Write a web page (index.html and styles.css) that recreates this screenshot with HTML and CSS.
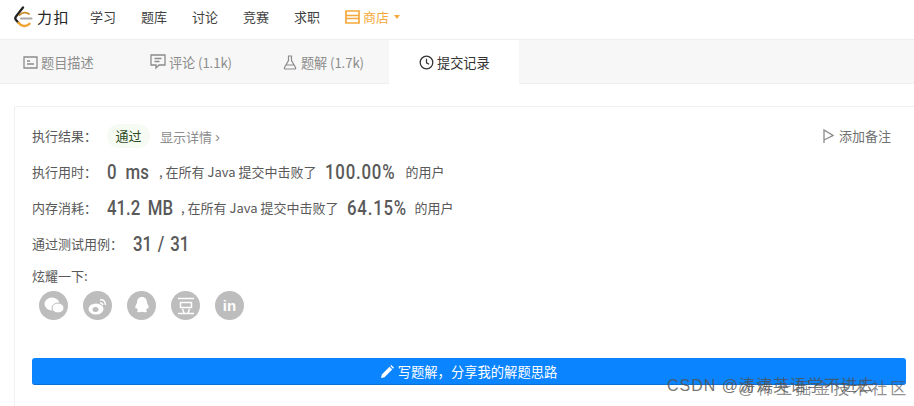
FILE: index.html
```html
<!DOCTYPE html>
<html lang="zh">
<head>
<meta charset="utf-8">
<title>力扣</title>
<link rel="stylesheet" href="styles.css">
</head>
<body>
<header class="nav">
  <div class="logo">
    <svg class="logo-mark" width="19" height="22" viewBox="0 0 19 22">
      <path d="M9 1.500 2 10.500c-1 1.300-.8 2.700.2 3.800l2.300 2.500" fill="none" stroke="#222" stroke-width="2.300" stroke-linecap="round" stroke-linejoin="round"/>
      <path d="M4.500 16.800c2.500 3.500 7 4.500 11 1" fill="none" stroke="#f0a32f" stroke-width="2.400" stroke-linecap="round"/>
      <path d="M5.500 9c2.500-2.500 6-3 9.500-1" fill="none" stroke="#c98a2c" stroke-width="1.800" stroke-linecap="round"/>
      <path d="M7 12.500h10.500" stroke="#a8a8a8" stroke-width="2" stroke-linecap="round"/>
    </svg>
    <span class="logo-text">力扣</span>
  </div>
  <nav class="menu">
    <a>学习</a><a>题库</a><a>讨论</a><a>竞赛</a><a>求职</a>
    <a class="store">
      <svg width="15" height="14" viewBox="0 0 15 14"><path d="M1 1h13v12H1zM1 5.500h13M1 8.500h13" fill="none" stroke="#f5a93c" stroke-width="1.700"/></svg>
      商店<i class="caret"></i>
    </a>
  </nav>
</header>

<div class="tabs">
  <div class="tab t1">
    <svg width="15" height="13" viewBox="0 0 15 13"><path d="M1 1h13v11H1zM4 5h3M4 8h7" fill="none" stroke="#8c8c8c" stroke-width="1.300"/></svg>
    题目描述
  </div>
  <div class="tab t2">
    <svg width="16" height="16" viewBox="0 0 16 16"><path d="M1 1h14v10H9l-3 3v-3H1zM4.500 4.500h7M4.500 7.500h5" fill="none" stroke="#8c8c8c" stroke-width="1.300"/></svg>
    评论 (1.1k)
  </div>
  <div class="tab t3">
    <svg width="14" height="15" viewBox="0 0 14 15"><path d="M5 1h4M5.500 1v4.500L1.500 12.500q-.6 1.500 1 1.500h9q1.600 0 1-1.500L8.500 5.500V1M3.500 10h7" fill="none" stroke="#8c8c8c" stroke-width="1.200"/></svg>
    题解 (1.7k)
  </div>
  <div class="tab active">
    <svg width="15" height="15" viewBox="0 0 15 15"><circle cx="7.500" cy="7.500" r="6.300" fill="none" stroke="#333" stroke-width="1.300"/><path d="M7.500 3.800v4l2.600 1.500" fill="none" stroke="#333" stroke-width="1.200"/></svg>
    提交记录
  </div>
</div>

<main class="content">
  <section class="card">
    <div class="row result">
      <span class="label">执行结果：</span>
      <span class="pass">通过</span>
      <span class="detail">显示详情 <span class="chev">›</span></span>
      <span class="note">
        <svg width="11" height="14" viewBox="0 0 11 14"><path d="M1 14V1l9 5.500-9 4.500" fill="none" stroke="#8a8a8a" stroke-width="1.300"/></svg>
        添加备注
      </span>
    </div>
    <div class="row stat s1">
      <span class="label">执行用时：</span>
      <b class="num n1 w-time">0 ms</b>
      <span class="txt">, 在所有 Java 提交中击败了</span>
      <b class="num n2 w-pct1">100.00%</b>
      <span class="txt">的用户</span>
    </div>
    <div class="row stat s2">
      <span class="label">内存消耗：</span>
      <b class="num n1 w-mem">41.2 MB</b>
      <span class="txt">, 在所有 Java 提交中击败了</span>
      <b class="num n2 w-pct2">64.15%</b>
      <span class="txt">的用户</span>
    </div>
    <div class="row stat s3">
      <span class="label">通过测试用例：</span>
      <b class="num cases">31 / 31</b>
    </div>
    <div class="share-label">炫耀一下:</div>
    <div class="shares">
      <span class="share">
        <svg width="20" height="18" viewBox="0 0 20 18"><ellipse cx="8" cy="7" rx="7.500" ry="6.500" fill="#fff"/><ellipse cx="14" cy="11" rx="6" ry="5" fill="#fff" stroke="#bdbdbd"/></svg>
      </span>
      <span class="share">
        <svg width="20" height="18" viewBox="0 0 20 18"><ellipse cx="8" cy="12" rx="7.500" ry="5.500" fill="#fff"/><ellipse cx="7.500" cy="12.500" rx="3" ry="2.500" fill="#bdbdbd"/><path d="M12 3q5-1 5.500 5M12 6q2.500-.5 3 2" fill="none" stroke="#fff" stroke-width="1.500"/></svg>
      </span>
      <span class="share">
        <svg width="18" height="19" viewBox="0 0 18 19"><path d="M9 1c3.500 0 5 2.500 5 5.500 0 1 1 2 1.500 3.500.6 2-.3 3-1 2-.4 1-1 1.500-1.500 2l1 1.500c-.5 1-2.500 1-5 .3-2.500.7-4.500.7-5-.3L5 14c-.5-.5-1.100-1-1.500-2-.7 1-1.600 0-1-2C3 8.500 4 7.500 4 6.500 4 3.500 5.500 1 9 1z" fill="#fff"/></svg>
      </span>
      <span class="share">
        <svg width="18" height="18" viewBox="0 0 18 18"><path d="M1 1.500h16M3.500 5.500h11v5h-11zM5.500 12l1.500 4M12.500 12 11 16M1 16.500h16" fill="none" stroke="#fff" stroke-width="1.500"/></svg>
      </span>
      <span class="share"><span class="in">in</span></span>
    </div>
    <button class="write">
      <svg width="13" height="13" viewBox="0 0 13 13"><path d="M0 13l.8-3.500L8.500 1.800l2.700 2.700-7.700 7.700zM9.300 1l1-1 2.700 2.700-1 1z" fill="#fff"/></svg>
      写题解，分享我的解题思路
    </button>
  </section>
</main>

<div class="watermark"><span>CSDN @涛涛英语学不进去</span><span class="wm2">@稀土掘金技术社区</span></div>
</body>
</html>
```

FILE: styles.css
```css
* { box-sizing: border-box; }
html, body { margin: 0; padding: 0; }
body {
  width: 914px;
  height: 406px;
  overflow: hidden;
  position: relative;
  background: #fff;
  font-family: "Noto Sans CJK SC", "Liberation Sans", sans-serif;
  color: #595959;
  font-size: 13px;
}
.nav {
  height: 39px;
  display: flex;
  align-items: center;
  background: #fff;
  padding-bottom: 6px;
}
.logo {
  display: flex;
  align-items: center;
  margin-left: 14px;
  width: 76px;
}
.logo-mark { margin-right: 4px; }
.logo-text {
  font-size: 15px;
  font-weight: 400;
  color: #262626;
  letter-spacing: 1.500px;
  line-height: 20px;
}
.menu { display: flex; align-items: center; gap: 23px; }
.menu a { font-size: 13px; color: #3f3f3f; line-height: 18px; width: 28px; white-space: nowrap; }
.menu a.store { display: flex; align-items: center; color: #f5a93c; gap: 3px; width: auto; }
.caret {
  width: 0;
  height: 0;
  margin-left: 2px;
  border: 3px solid transparent;
  border-top: 4px solid #f5a93c;
  border-bottom: 0;
}
.tabs {
  height: 45px;
  display: flex;
  background: #f7f7f7;
  border-top: 1px solid #eee;
  border-bottom: 1px solid #efefef;
  font-size: 13.200px;
  color: #8c8c8c;
}
.tab {
  display: flex;
  align-items: center;
  gap: 3px;
  white-space: nowrap;
  height: 44px;
}
.t1 { width: 127px; padding-left: 23px; }
.t2 { width: 133px; padding-left: 23px; letter-spacing: -.1px; }
.t3 { width: 129px; padding-left: 23px; gap: 4px; letter-spacing: -.1px; }
.tab.active {
  width: 130px;
  background: #fff;
  color: #333;
  padding-left: 30px;
}
.content { padding: 22px 0 0 14px; }
.card {
  width: 900px;
  height: 300px;
  background: #fff;
  border: 1px solid #f0f0f0;
  border-width: 1px 0 0 1px;
  border-radius: 3px 0 0 0;
  padding: 16px 0 0 17px;
}
.row { display: flex; align-items: center; white-space: nowrap; }
.label { font-size: 13px; color: #595959; line-height: 18px; }
.result { height: 26px; }
.result .label { width: 75px; }
.pass {
  width: 43px;
  height: 24px;
  line-height: 24px;
  text-align: center;
  border-radius: 12px;
  background: #f6fbf3;
  color: #2a4a22;
}
.detail { margin-left: 10px; color: #8c8c8c; font-size: 13px; }
.chev { font-family: "Liberation Sans", sans-serif; font-size: 15px; }
.note {
  position: absolute;
  left: 823px;
  top: 127px;
  display: flex;
  align-items: center;
  gap: 5px;
  color: #707070;
  font-size: 13px;
  line-height: 18px;
}
.stat { height: 26px; }
.s1, .s2, .s3 { margin-top: 10px; }
.stat .label { width: 75px; }
.s3 .label { width: 101px; }
.num {
  display: block;
  flex: none;
  font-family: "Roboto", "Liberation Sans", sans-serif;
  font-weight: 500;
  font-size: 21px;
  color: #595959;
  line-height: 26px;
  word-spacing: 4px;
  transform: scaleX(.8);
  transform-origin: left center;
}
.w-time { width: 43px; word-spacing: 6px; }
.w-mem { width: 65px; }
.w-pct1 { width: 71px; letter-spacing: 1px; }
.w-pct2 { width: 58px; letter-spacing: 1px; }
.cases { width: 54px; word-spacing: 2px; }
.txt { font-size: 13px; color: #595959; line-height: 16px; }
.n1 + .txt { margin-left: 9px; }
.n2 { margin-left: 9px; }
.n2 + .txt { margin-left: 9px; }
.share-label { margin-top: 10px; font-size: 13px; line-height: 18px; color: #595959; }
.shares { display: flex; gap: 15px; margin-top: 6px; margin-left: 7px; }
.share {
  width: 29px;
  height: 29px;
  border-radius: 50%;
  background: #bdbdbd;
  display: flex;
  align-items: center;
  justify-content: center;
}
.share svg { display: block; }
.in { color: #fff; font: 700 15px "Liberation Sans", sans-serif; }
.write {
  display: flex;
  align-items: center;
  justify-content: center;
  gap: 4px;
  width: 874px;
  height: 27px;
  margin-top: 38px;
  padding: 0;
  background: #0a84ff;
  border: 0;
  border-bottom: 1px solid #0b6fd6;
  border-radius: 3px;
  color: #fff;
  font: 13.300px "Noto Sans CJK SC", sans-serif;
}
.watermark {
  position: absolute;
  left: 667px;
  top: 375px;
  font-size: 16px;
  line-height: 22px;
  color: rgba(80, 80, 80, .8);
  letter-spacing: 1px;
  white-space: nowrap;
  font-family: "Liberation Sans", "Noto Sans CJK SC", sans-serif;
}
.wm2 { position: absolute; left: 71px; top: 3px; letter-spacing: 3px; font-size: 16px; color: rgba(80, 80, 80, .65); }
```
